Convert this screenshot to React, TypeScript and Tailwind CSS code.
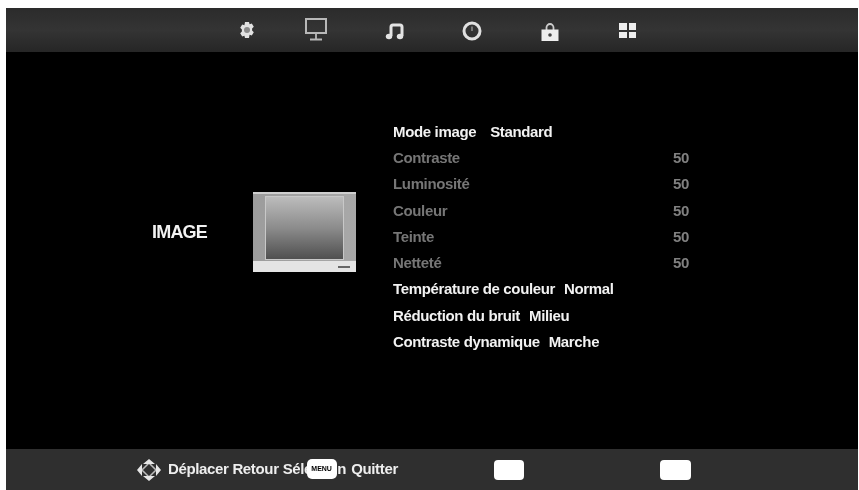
const GREY = ['Contraste', 'Luminosité', 'Couleur', 'Teinte', 'Netteté']

function TopIcons() {
  return (
    <div className="flex h-[44px] items-center pl-[232px] bg-gradient-to-b from-[#2b2b2b] via-[#343434] to-[#262626]">
      <svg className="mr-[48px] h-[18px] w-[18px]" viewBox="0 0 18 18">
        <path d="M7 1h4l.6 2.2 2.2-.8 2 3.400-1.700 1.600v2.200l1.700 1.600-2 3.400-2.200-.8L11 17H7l-.6-2.200-2.200.8-2-3.400 1.700-1.600V8.400L2.200 6.800l2-3.400 2.200.8z" fill="#e2e2e2" />
        <circle cx="9" cy="9" r="3" fill="#8a8a8a" />
      </svg>
      <svg className="mr-[57px] mb-[2px] h-[24px] w-[24px]" viewBox="0 0 24 24" fill="none" stroke="#b8b8b8">
        <rect x="2" y="2" width="20" height="14" strokeWidth="2" />
        <path d="M12 16v6M6 22.500h12" strokeWidth="1.800" />
      </svg>
      <svg className="mr-[56px] mt-[2px] h-[20px] w-[20px]" viewBox="0 0 20 20" fill="none" stroke="#e4e4e4">
        <path d="M6 15V6q0-2 2-2h7q2 0 2 2v9" strokeWidth="3" />
        <ellipse cx="4" cy="15.500" rx="3.200" ry="2.800" fill="#e4e4e4" strokeWidth="0" />
        <ellipse cx="15" cy="15.500" rx="3.200" ry="2.800" fill="#e4e4e4" strokeWidth="0" />
      </svg>
      <svg className="mr-[57px] mt-[2px] h-[22px] w-[22px]" viewBox="0 0 22 22" fill="none" stroke="#e0e0e0">
        <circle cx="11" cy="11" r="8" strokeWidth="3" />
        <path d="M11 6.500v4.500" strokeWidth="1.600" stroke="#888888" />
      </svg>
      <svg className="mr-[59px] mt-[4px] h-[20px] w-[20px]" viewBox="0 0 20 20">
        <path d="M6.500 9V5.500a3.500 3.500 0 0 1 7 0V9" fill="none" stroke="#cccccc" strokeWidth="1.800" />
        <rect x="1.500" y="7.500" width="17" height="11.500" fill="#eeeeee" />
        <circle cx="10" cy="13" r="1.800" fill="#444444" />
      </svg>
      <div className="mt-[1px] grid h-[15px] w-[17px] grid-cols-2 gap-[2px]">
        <div className="bg-[#eeeeee]" />
        <div className="bg-[#eeeeee]" />
        <div className="bg-[#eeeeee]" />
        <div className="bg-[#eeeeee]" />
      </div>
    </div>
  )
}

function TvPicture() {
  return (
    <div className="flex h-[80px] w-[103px] flex-col border-t-[2px] border-[#cfcfcf] bg-gradient-to-r from-[#9c9c9c] to-[#a8a8a8] pt-[3px]">
      <div className="mx-[13px] h-[62px] bg-gradient-to-b from-[#bcbcbc] via-[#8c8c8c] to-[#505050] outline outline-[#c8c8c8]" />
      <div className="mt-[2px] flex flex-1 items-center justify-end bg-[#e4e4e4] pr-[6px]">
        <div className="h-[2px] w-[12px] bg-[#666666]" />
      </div>
    </div>
  )
}

function Row({ children, className }: { children: React.ReactNode; className: string }) {
  return <div className={`flex h-[26.25px] items-center ${className}`}>{children}</div>
}

export default function App() {
  return (
    <div className="h-[490px] w-[859px] bg-white pl-[6px] pt-[8px] pr-px font-['Liberation_Sans',sans-serif] font-bold">
      <div className="flex h-[482px] flex-col bg-black blur-[0.4px]">
        <TopIcons />
        <div className="flex flex-1 items-start pl-[146px]">
          <div className="mt-[140px] flex items-center">
            <div className="w-[101px] text-[18px] tracking-[-0.8px] text-[#f2f2f2]">IMAGE</div>
            <TvPicture />
          </div>
          <div className="ml-[37px] mt-[67px] w-[296px] text-[15px] tracking-[-0.35px]">
            <Row className="text-[#f2f2f2]">
              <span>Mode image</span>
              <span className="ml-[14px]">Standard</span>
            </Row>
            {GREY.map(label => (
              <Row key={label} className="justify-between text-[#767676]">
                <span>{label}</span>
                <span className="text-[#808080]">50</span>
              </Row>
            ))}
            <Row className="text-[#f2f2f2]">
              <span>Température de couleur</span>
              <span className="ml-[9px]">Normal</span>
            </Row>
            <Row className="text-[#f2f2f2]">
              <span>Réduction du bruit</span>
              <span className="ml-[9px]">Milieu</span>
            </Row>
            <Row className="text-[#f2f2f2]">
              <span>Contraste dynamique</span>
              <span className="ml-[9px]">Marche</span>
            </Row>
          </div>
        </div>
        <div className="flex h-[41px] items-center bg-[#2f2f2f] pl-[130px] text-[15px] tracking-[-0.35px] text-[#eeeeee]">
          <svg className="mr-[6px] h-[24px] w-[26px]" viewBox="0 0 26 24" fill="none">
            <path d="M13 5L20 12L13 19L6 12Z" stroke="#bbbbbb" strokeWidth="1.500" />
            <path d="M13 1l6 5H7zM13 23l-6-5h12zM1 12l5-6v12zM25 12l-5 6V6z" fill="#e6e6e6" />
          </svg>
          <span>Déplacer Retour</span>
          <div className="relative ml-[4px] w-[117px]">
            <span className="mr-[5px]">Sélection</span>
            <span>Quitter</span>
            <span className="absolute left-[24px] top-[1px] flex h-[20px] w-[30px] items-center justify-center rounded-[5px] bg-white text-[7px] tracking-normal text-black">MENU</span>
          </div>
          <div className="ml-[94px] h-[20px] w-[30px] rounded-[4px] bg-white" />
          <div className="ml-[136px] h-[20px] w-[31px] rounded-[4px] bg-white" />
        </div>
      </div>
    </div>
  )
}
